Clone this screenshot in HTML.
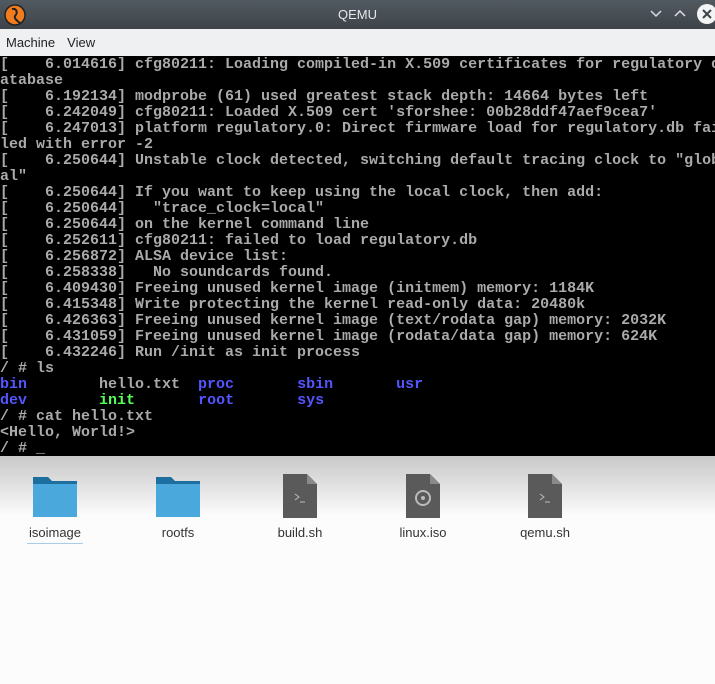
<!DOCTYPE html>
<html><head><meta charset="utf-8"><style>
*{margin:0;padding:0;box-sizing:border-box}
body{width:715px;height:684px;overflow:hidden;background:#fcfcfc;font-family:"Liberation Sans",sans-serif;position:relative}
#title{position:absolute;left:0;top:0;width:715px;height:29px;background:linear-gradient(#525a61,#3d4348);color:#e6e8ea;font-size:13px;text-align:center;line-height:29px}
#menu{position:absolute;left:0;top:29px;width:715px;height:27px;background:#eff0f1;font-size:13px;color:#222;line-height:28px}
#term{position:absolute;left:0;top:56px;width:715px;height:400px;padding-top:1px;background:#000;color:#aaa;font-family:"Liberation Mono",monospace;font-size:15px;line-height:16px;white-space:pre;overflow:hidden;font-weight:bold}
.b{color:#5555ff}.g{color:#55ff55}
#shadow{position:absolute;left:0;top:456px;width:715px;height:60px;background:linear-gradient(#c8c8c8,rgba(252,252,252,0))}
.it{position:absolute;top:474px;width:100px;text-align:center;font-size:13px;color:#333}
.it svg{display:block;margin:0 auto 7px}
</style></head><body>
<div id="title">QEMU
<svg style="position:absolute;left:4px;top:4px" width="22" height="22" viewBox="0 0 22 22"><circle cx="11" cy="11" r="10" fill="#f07c1e"/><circle cx="11" cy="11" r="10" fill="none" stroke="#222" stroke-width="1.5"/><path d="M8 5c5-1 6 4 3 7-1 2 2 5 5 7" stroke="#222" stroke-width="2" fill="none"/></svg>
<svg style="position:absolute;left:650px;top:9px" width="12" height="10"><path d="M1 2l5 5 5-5" stroke="#dde" stroke-width="1.5" fill="none"/></svg>
<svg style="position:absolute;left:674px;top:8px" width="12" height="10"><path d="M1 8l5-5 5 5" stroke="#dde" stroke-width="1.5" fill="none"/></svg>
<svg style="position:absolute;left:696px;top:3px" width="19" height="22"><circle cx="11" cy="11" r="10" fill="#f4f4f4"/><path d="M7 7l8 8M15 7l-8 8" stroke="#3d4348" stroke-width="2"/></svg>
</div>
<div id="menu"><span style="margin-left:6px">Machine</span><span style="margin-left:12px">View</span></div>
<div id="term">[    6.014616] cfg80211: Loading compiled-in X.509 certificates for regulatory d
atabase
[    6.192134] modprobe (61) used greatest stack depth: 14664 bytes left
[    6.242049] cfg80211: Loaded X.509 cert 'sforshee: 00b28ddf47aef9cea7'
[    6.247013] platform regulatory.0: Direct firmware load for regulatory.db fai
led with error -2
[    6.250644] Unstable clock detected, switching default tracing clock to "glob
al"
[    6.250644] If you want to keep using the local clock, then add:
[    6.250644]   "trace_clock=local"
[    6.250644] on the kernel command line
[    6.252611] cfg80211: failed to load regulatory.db
[    6.256872] ALSA device list:
[    6.258338]   No soundcards found.
[    6.409430] Freeing unused kernel image (initmem) memory: 1184K
[    6.415348] Write protecting the kernel read-only data: 20480k
[    6.426363] Freeing unused kernel image (text/rodata gap) memory: 2032K
[    6.431059] Freeing unused kernel image (rodata/data gap) memory: 624K
[    6.432246] Run /init as init process
/ # ls
<span class="b">bin</span>        hello.txt  <span class="b">proc</span>       <span class="b">sbin</span>       <span class="b">usr</span>
<span class="b">dev</span>        <span class="g">init</span>       <span class="b">root</span>       <span class="b">sys</span>
/ # cat hello.txt
&lt;Hello, World!&gt;
/ # _</div>
<div id="shadow"></div>
<div class="it" style="left:5px"><svg width="46" height="44"><path d="M1 3h15l4 4h25v5H1z" fill="#1d6fa0"/><rect x="1" y="10" width="44" height="33" fill="#4aa8dd"/></svg><span style="border-bottom:1px solid #a7cde8;padding:0 2px 3px">isoimage</span></div>
<div class="it" style="left:128px"><svg width="46" height="44"><path d="M1 3h15l4 4h25v5H1z" fill="#1d6fa0"/><rect x="1" y="10" width="44" height="33" fill="#4aa8dd"/></svg>rootfs</div>
<div class="it" style="left:250px"><svg width="34" height="44"><path d="M0 0h24l10 10v34H0z" fill="#5a5a5a"/><path d="M24 0v10h10z" fill="#8a8a8a"/><path d="M12 20l4 3-4 3M17 28h5" stroke="#bbb" fill="none"/></svg>build.sh</div>
<div class="it" style="left:373px"><svg width="34" height="44"><path d="M0 0h24l10 10v34H0z" fill="#5a5a5a"/><path d="M24 0v10h10z" fill="#8a8a8a"/><circle cx="17" cy="24" r="7" fill="none" stroke="#bbb" stroke-width="2"/><circle cx="17" cy="24" r="2" fill="#bbb"/></svg>linux.iso</div>
<div class="it" style="left:495px"><svg width="34" height="44"><path d="M0 0h24l10 10v34H0z" fill="#5a5a5a"/><path d="M24 0v10h10z" fill="#8a8a8a"/><path d="M12 20l4 3-4 3M17 28h5" stroke="#bbb" fill="none"/></svg>qemu.sh</div>
</body></html>
